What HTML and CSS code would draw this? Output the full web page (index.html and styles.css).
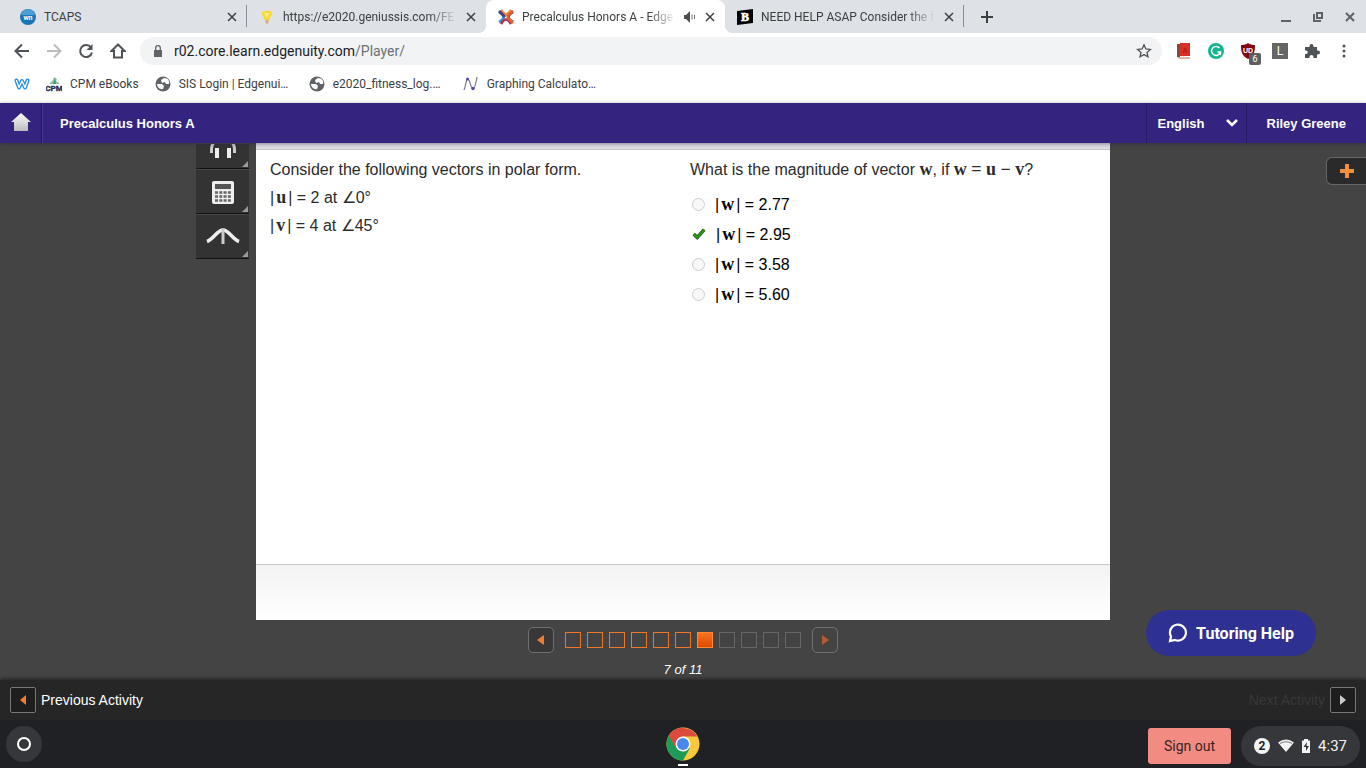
FILE: index.html
```html
<!DOCTYPE html>
<html lang="en">
<head>
    <meta charset="UTF-8">
    <meta name="viewport" content="width=device-width, initial-scale=1.0">
    <title>Precalculus Honors A - Edgenuity</title>
    <link rel="stylesheet" href="styles.css">
</head>
<body>
    <!-- browser tabs -->
    <div class="tab-strip">
        <div class="tab">
            <svg class="icon" viewBox="0 0 16 16"><circle cx="8" cy="8" r="8" fill="#1c75b4"/><path d="M1 6a7 6 0 0 1 14 0z" fill="#4b9fd6"/><text x="8" y="11" font-size="7" font-weight="bold" text-anchor="middle" fill="#fff">wn</text></svg>
            <span class="tab-title">TCAPS</span>
            <button class="tab-close" aria-label="Close tab"><svg viewBox="0 0 12 12"><path d="M2 2l8 8M10 2l-8 8"/></svg></button>
        </div>
        <div class="tab divided">
            <svg class="icon" viewBox="0 0 16 16"><path d="M3 4c0-3 10-3 10 0 0 3-2 4-2.500 7h-5C5 8 3 7 3 4z" fill="#fdd835"/><path d="M5 4h6L8 9z" fill="#fff176"/><path d="M6 11h4l-.5 3-1.500 1-1.500-1z" fill="#d9b08c"/></svg>
            <span class="tab-title fade">https://e2020.geniussis.com/FE</span>
            <button class="tab-close" aria-label="Close tab"><svg viewBox="0 0 12 12"><path d="M2 2l8 8M10 2l-8 8"/></svg></button>
        </div>
        <div class="tab active">
            <svg class="icon" viewBox="0 0 16 16" fill="none" stroke-width="2.600"><path d="M1 3Q10 8 1 13" stroke="#2a9fd0"/><path d="M15 3Q6 8 15 13" stroke="#1f4f8f"/><path d="M3 15Q8 6 13 15" stroke="#b3305a"/><path d="M3 1Q8 10 13 1" stroke="#f0852c"/><path d="M1 2l6 6" stroke="#4a3a86"/><path d="M15 2L9 8" stroke="#e2572b"/><path d="M15 14L9 8" stroke="#e8642c"/></svg>
            <span class="tab-title fade">Precalculus Honors A - Edge</span>
            <svg class="speaker" viewBox="0 0 12 12"><path d="M0 4h2l4-4v12L2 8H0z" fill="#4a4d51"/><path d="M8 3.500v5M10.500 4v4" stroke="#6b6e72" fill="none"/></svg>
            <button class="tab-close" aria-label="Close tab"><svg viewBox="0 0 12 12"><path d="M2 2l8 8M10 2l-8 8"/></svg></button>
        </div>
        <div class="tab divided">
            <svg class="icon" viewBox="0 0 16 16"><path d="M0 2l16-2v14L0 16z" fill="#000"/><text x="8" y="12" font-family="Liberation Serif" font-size="12" font-weight="bold" text-anchor="middle" fill="#fff" stroke="#fff" stroke-width=".6">B</text></svg>
            <span class="tab-title fade">NEED HELP ASAP Consider the f</span>
            <button class="tab-close" aria-label="Close tab"><svg viewBox="0 0 12 12"><path d="M2 2l8 8M10 2l-8 8"/></svg></button>
        </div>
        <button class="new-tab" aria-label="New tab"><svg viewBox="0 0 12 12"><path d="M6 0v12M0 6h12"/></svg></button>
        <div class="window-buttons">
            <button aria-label="Minimize"><svg viewBox="0 0 12 12"><path d="M1 10h10"/></svg></button>
            <button aria-label="Restore"><svg viewBox="0 0 12 12"><path d="M5 2h5v5H5zM2 3v7h7"/></svg></button>
            <button aria-label="Close"><svg viewBox="0 0 12 12"><path d="M2 2l8 8M10 2l-8 8"/></svg></button>
        </div>
    </div>

    <!-- address bar -->
    <div class="toolbar">
        <button class="tool" aria-label="Back"><svg viewBox="0 0 16 16"><path d="M15 8H2M8 1.500L1.500 8 8 14.500"/></svg></button>
        <button class="tool disabled" aria-label="Forward"><svg viewBox="0 0 16 16"><path d="M1 8h13M8 1.500L14.500 8 8 14.500"/></svg></button>
        <button class="tool" aria-label="Reload"><svg viewBox="0 0 16 16"><path d="M13 4.500A6 6 0 1 0 14 9.500"/><path d="M14.500 1v6h-6z" class="solid"/></svg></button>
        <button class="tool" aria-label="Home"><svg viewBox="0 0 16 16"><path d="M8 1.500L1.500 8H4v6.500h8V8h2.500z"/></svg></button>
        <div class="omnibox">
            <svg class="lock" viewBox="0 0 10 12"><path d="M1 5h8v7H1z" fill="#5f6368"/><path d="M2.700 5V3a2.300 2.300 0 0 1 4.600 0v2" fill="none" stroke="#5f6368" stroke-width="1.300"/></svg>
            <div class="url">r02.core.learn.edgenuity.com<span>/Player/</span></div>
            <button class="star" aria-label="Bookmark this page"><svg viewBox="0 0 16 16"><path d="M8 1.800l1.900 4.100 4.500.500-3.400 3 1 4.400L8 11.600l-4 2.200 1-4.400-3.400-3 4.500-.5z"/></svg></button>
        </div>
        <button class="tool" aria-label="Dictionary"><svg viewBox="0 0 16 16"><path class="plain" d="M1 1h3v13H1z" fill="#7c4d45"/><path class="plain" d="M4 0h10v13H4z" fill="#d93025"/><path class="plain" d="M1 14h13v2H3z" fill="#e8b29c"/><text x="9" y="10" font-size="8" text-anchor="middle" fill="#a8150e">A</text></svg></button>
        <button class="tool" aria-label="Grammarly"><svg viewBox="0 0 16 16"><circle class="plain" cx="8" cy="8" r="8" fill="#15b68f"/><path class="plain" d="M11.500 5A4.500 4.500 0 1 0 12.400 9H9.500M12.400 9v3" fill="none" stroke="#fff" stroke-width="1.500"/></svg></button>
        <button class="tool" aria-label="uBlock">
            <svg viewBox="0 0 16 16"><path class="plain" d="M8 0c2 1.500 4 2 7 2 0 7-1 11-7 14C2 13 1 9 1 2c3 0 5-.5 7-2z" fill="#800610"/><text x="8" y="10" font-size="7" font-weight="bold" text-anchor="middle" fill="#fff">UD</text></svg>
            <span class="badge">6</span>
        </button>
        <button class="tool" aria-label="Extension"><span class="letter">L</span></button>
        <button class="tool" aria-label="Extensions"><svg viewBox="0 0 16 16"><path class="solid" d="M1 4h4.500V3a2 2 0 0 1 4 0v1H13v3.500h1a2 2 0 0 1 0 4h-1V15H9.500v-1a2 2 0 0 0-4 0v1H1v-4h1a1.700 1.700 0 0 0 0-3.500H1z"/></svg></button>
        <button class="tool" aria-label="Menu"><svg viewBox="0 0 16 16"><g class="solid"><circle cx="8" cy="3" r="1.500"/><circle cx="8" cy="8" r="1.500"/><circle cx="8" cy="13" r="1.500"/></g></svg></button>
    </div>

    <nav class="bookmarks">
        <a href="#" aria-label="Weebly"><svg class="icon" viewBox="0 0 16 16" fill="none" stroke-linejoin="round" stroke-linecap="round"><path d="M2.500 4.500L5 11.500 8 5l3 6.500 2.500-7" stroke="#2990ea" stroke-width="4"/><path d="M2.500 4.500L5 11.500 8 5l3 6.500 2.500-7" stroke="#fff" stroke-width="1.300"/></svg></a>
        <a href="#"><svg class="icon" viewBox="0 0 16 16"><path d="M3 8l4-4 1-3 3 2-1 2 4 3z" fill="#8cc3a0"/><path d="M7 8l2-6 1 6z" fill="#3f9b6c"/><text x="8" y="15" font-size="8" font-weight="bold" text-anchor="middle" fill="#1d2f58" stroke="#1d2f58" stroke-width=".4">CPM</text></svg><span>CPM eBooks</span></a>
        <a href="#"><svg class="icon" viewBox="0 0 16 16"><circle cx="8" cy="8" r="7.500" fill="#5f6368"/><path d="M2 8h5l2 2-1 3c-3 1-6-2-6-5zM6 4l3-2c4 0 6 3 5 6h-3l-1-2-3 1z" fill="#fff"/></svg><span class="cut">SIS Login | Edgenui…</span></a>
        <a href="#"><svg class="icon" viewBox="0 0 16 16"><circle cx="8" cy="8" r="7.500" fill="#5f6368"/><path d="M2 8h5l2 2-1 3c-3 1-6-2-6-5zM6 4l3-2c4 0 6 3 5 6h-3l-1-2-3 1z" fill="#fff"/></svg><span class="cut">e2020_fitness_log.…</span></a>
        <a href="#"><svg class="icon" viewBox="0 0 16 16"><path d="M1 14C3 10 3 2 5 3s3 10 5 10 3-6 4-12" fill="none" stroke="#77728f" stroke-width="1.200"/><g fill="#6042a6"><circle cx="4.500" cy="3" r="1.500"/><circle cx="10" cy="12.500" r="1.700"/></g></svg><span class="cut">Graphing Calculato…</span></a>
    </nav>

    <!-- course header -->
    <header class="course-bar">
        <a class="home" href="#" aria-label="Home"><svg viewBox="0 0 20 20"><defs><linearGradient id="silver" x2="0" y2="1"><stop stop-color="#fff"/><stop offset="1" stop-color="#bbb"/></linearGradient></defs><path d="M10 0l10 9h-3v9H3v-9H0z" fill="url(#silver)"/></svg></a>
        <h1>Precalculus Honors A</h1>
        <div class="language">
            <select aria-label="Language"><option>English</option></select>
            <svg viewBox="0 0 12 12"><path d="M1 3l5 5 5-5"/></svg>
        </div>
        <a class="user" href="#">Riley Greene</a>
    </header>

    <main class="player">
        <div class="side">
            <div class="tools">
                <button class="audio" aria-label="Read aloud"><svg viewBox="0 0 34 34"><path d="M5.500 27v-4q0-5 4-8M28.500 27v-4q0-5-4-8" fill="none" stroke="#ccc" stroke-width="3"/><path d="M9 22h4v10H9zM21 22h4v10h-4z" fill="#eee"/></svg></button>
                <button aria-label="Calculator"><svg viewBox="0 0 34 34"><rect x="6" y="6" width="22" height="23" rx="2" fill="#eee"/><path d="M9 9h16v5H9z" fill="#555"/><path d="M9 17.500h16M9 21.500h16M9 25.500h16" stroke="#666" stroke-width="2.500" stroke-dasharray="3 1.300"/></svg></button>
                <button aria-label="Graphing tool"><svg viewBox="0 0 34 34"><path d="M1 21.500C8 19 11 10 17 10s9 9 16 11.500" fill="none" stroke="#eee" stroke-width="3.500"/><path d="M17 9v15" stroke="#ccc" stroke-width="3"/></svg></button>
            </div>
        </div>

        <section class="stage">
            <div class="frame">
                <div class="question">
                    <div class="prompt">
                        <p>Consider the following vectors in polar form.</p>
                        <p>|<b>u</b>| = 2 at ∠0°</p>
                        <p>|<b>v</b>| = 4 at ∠45°</p>
                    </div>
                    <form class="answers">
                        <p>What is the magnitude of vector <strong>w</strong>, if <strong>w = u − v</strong>?</p>
                        <label><input type="radio" name="answer"><span>|<b>w</b>| = 2.77</span></label>
                        <label><input class="correct" type="radio" name="answer" checked><svg class="check" viewBox="0 0 16 16"><path d="M2 8l4 4 8-9" fill="none" stroke="#1d5a10" stroke-width="4"/><path d="M2 8l4 4 8-9" fill="none" stroke="#2f9319" stroke-width="2.500"/></svg><span>|<b>w</b>| = 2.95</span></label>
                        <label><input type="radio" name="answer"><span>|<b>w</b>| = 3.58</span></label>
                        <label><input type="radio" name="answer"><span>|<b>w</b>| = 5.60</span></label>
                    </form>
                </div>
                <div class="frame-foot"></div>
            </div>

            <div class="pager">
                <button class="step" aria-label="Previous question"><svg viewBox="0 0 8 10"><path d="M7 0v10L0 5z"/></svg></button>
                <div class="squares">
                    <a class="done" href="#" aria-label="1"></a>
                    <a class="done" href="#" aria-label="2"></a>
                    <a class="done" href="#" aria-label="3"></a>
                    <a class="done" href="#" aria-label="4"></a>
                    <a class="done" href="#" aria-label="5"></a>
                    <a class="done" href="#" aria-label="6"></a>
                    <a class="current" href="#" aria-label="7"></a>
                    <a href="#" aria-label="8"></a>
                    <a href="#" aria-label="9"></a>
                    <a href="#" aria-label="10"></a>
                    <a href="#" aria-label="11"></a>
                </div>
                <button class="step off" aria-label="Next question"><svg viewBox="0 0 8 10"><path d="M1 0v10l7-5z"/></svg></button>
            </div>
            <p class="count">7 of 11</p>
        </section>

        <div class="side-right">
            <button class="add-note" aria-label="Open notes"><svg viewBox="0 0 14 14"><path d="M7 0v14M0 7h14"/></svg></button>
        </div>
        <button class="tutoring">
            <svg viewBox="0 0 20 20"><path d="M2 18l1-4.500A8 8 0 1 1 7 17z"/></svg>
            Tutoring Help
        </button>
    </main>

    <footer class="activity-bar">
        <button class="activity"><span class="arrow-box"><svg viewBox="0 0 8 10"><path d="M7 0v10L1 5z"/></svg></span>Previous Activity</button>
        <button class="activity next">Next Activity<span class="arrow-box"><svg viewBox="0 0 8 10"><path d="M1 0v10l6-5z"/></svg></span></button>
    </footer>

    <!-- system shelf -->
    <div class="shelf">
        <div class="shelf-left"><button class="launcher" aria-label="Launcher"><svg viewBox="0 0 16 16"><circle cx="8" cy="8" r="6"/></svg></button></div>
        <button class="chrome" aria-label="Chrome">
            <svg viewBox="0 0 34 34"><circle cx="17" cy="17" r="16.500" fill="#fbc83b"/><path d="M17 17L2.700 8.800A16.500 16.500 0 0 0 17 33.500l7-12.500z" fill="#1c9c57"/><path d="M2.700 8.800A16.500 16.500 0 0 1 31.300 9.500H17L10 21z" fill="#dc4a3e"/><circle cx="17" cy="17" r="7.500" fill="#fff"/><circle cx="17" cy="17" r="6" fill="#4a86ef"/></svg>
            <span class="running"></span>
        </button>
        <div class="shelf-right">
            <button class="sign-out">Sign out</button>
            <button class="status">
                <span class="notices">2</span>
                <svg viewBox="0 0 16 16"><path d="M0 4.500Q8-1.500 16 4.500L8 14z" fill="#f1f3f4"/><path d="M2 5.500q6-3.500 12 0" fill="none" stroke="#77797b"/></svg>
                <svg class="battery" viewBox="0 0 8 14"><path d="M2 0h4v1.500h2V14H0V1.500h2z" fill="#f1f3f4"/><path d="M5 3L1.500 8H4v4l3-5H4.500z" fill="#36373a"/></svg>
                <span>4:37</span>
            </button>
        </div>
    </div>
</body>
</html>
```
FILE: styles.css
```css
* {
    box-sizing: border-box;
}
body {
    margin: 0;
    min-height: 100vh;
    display: flex;
    flex-direction: column;
    font-family: "Liberation Sans", Arial, sans-serif;
    background-color: #444;
}
button {
    border: 0;
    padding: 0;
    background: none;
    font-family: inherit;
}
button, a {
    display: flex;
    align-items: center;
}
a {
    color: inherit;
    text-decoration: none;
}
p {
    margin: 0;
}
.icon {
    width: 16px;
    height: 16px;
    flex: none;
}

/* tabs */
.tab-strip {
    display: flex;
    height: 33px;
    padding-left: 8px;
    background-color: #dee1e6;
    font: 12px Roboto, sans-serif;
    color: #3c4043;
}
.tab {
    display: flex;
    align-items: center;
    gap: 8px;
    width: 239px;
    padding: 0 8px 0 12px;
    border-right: 1px solid transparent;
}
.tab:first-child, .divided:nth-child(4) {
    border-image: linear-gradient(transparent 6px, #8a8d91 6px, #8a8d91 26px, transparent 26px) 1;
    border-style: solid;
    border-width: 0 1px 0 0;
}
.tab.active {
    position: relative;
    background-color: #fff;
    border-radius: 8px 8px 0 0;
}
/* curved feet of the active tab */
.tab.active::before, .tab.active::after {
    content: "";
    position: absolute;
    bottom: 0;
    width: 8px;
    height: 8px;
}
.tab.active::before {
    left: -8px;
    background: radial-gradient(circle at 0 0, transparent 8px, #fff 8px);
}
.tab.active::after {
    right: -9px;
    background: radial-gradient(circle at 100% 0, transparent 8px, #fff 8px);
}
.tab-title {
    flex: 1;
    overflow: hidden;
    white-space: nowrap;
    line-height: 16px;
}
.tab-title.fade {
    -webkit-mask-image: linear-gradient(to left, transparent, #000 28px);
    mask-image: linear-gradient(to left, transparent, #000 28px);
}
.speaker {
    width: 12px;
    height: 12px;
    flex: none;
}
.tab-close svg, .new-tab svg, .window-buttons svg {
    width: 12px;
    height: 12px;
    fill: none;
    stroke: #3c4043;
    stroke-width: 2;
}
.tab-close svg {
    stroke-width: 1.5;
}
.new-tab {
    padding: 0 17px;
}
.window-buttons {
    display: flex;
    gap: 20px;
    margin-left: auto;
    padding-right: 10px;
}
.window-buttons svg {
    stroke: #5f6368;
}

/* address bar */
.toolbar {
    display: flex;
    align-items: center;
    height: 36px;
    padding: 0 6px;
    background-color: #fff;
}
.tool {
    position: relative;
    justify-content: center;
    width: 32px;
    height: 28px;
}
.tool svg, .star svg {
    width: 16px;
    height: 16px;
}
.tool path:not(.plain), .star path {
    fill: none;
    stroke: #4f5357;
    stroke-width: 2;
}
.star path {
    stroke-width: 1.3;
}
.tool.disabled path:not(.plain) {
    stroke: #babcbe;
}
.tool path.solid:not(.plain), .tool .solid {
    fill: #4f5357;
    stroke: none;
}
.badge {
    position: absolute;
    right: 3px;
    bottom: 0;
    width: 12px;
    border-radius: 2px;
    background-color: #5d5f61;
    color: #fff;
    font: 9px/12px Roboto, sans-serif;
    text-align: center;
}
.letter {
    width: 16px;
    background-color: #666;
    color: #fff;
    font: 12px/16px Roboto, sans-serif;
}
.omnibox {
    display: flex;
    align-items: center;
    flex: 1;
    height: 28px;
    margin: 0 6px;
    padding: 0 10px 0 13px;
    border-radius: 14px;
    background-color: #f1f3f4;
    font: 14px Roboto, sans-serif;
    color: #202124;
}
.lock {
    width: 10px;
    height: 12px;
    margin-right: 11px;
}
.url {
    flex: 1;
}
.url span {
    color: #6d7175;
}

.bookmarks {
    display: flex;
    align-items: center;
    gap: 16px;
    height: 34px;
    padding: 0 14px 4px;
    background-color: #fff;
    font: 12px Roboto, sans-serif;
    color: #3c4043;
}
.bookmarks a {
    gap: 8px;
}
.cut {
    width: 114px;
    white-space: nowrap;
}

/* course header */
.course-bar {
    display: flex;
    align-items: stretch;
    height: 40px;
    background-color: #34237f;
    color: #fff;
    font-size: 13px;
    font-weight: bold;
    box-shadow: 0 1px 4px rgba(40, 30, 80, 0.5);
    position: relative;
    z-index: 1;
}
.home {
    justify-content: center;
    width: 42px;
    border-right: 1px solid #231656;
    box-shadow: 1px 0 #4a3a94;
}
.home svg {
    width: 20px;
    height: 20px;
}
.course-bar h1 {
    flex: 1;
    margin: 0;
    padding-left: 18px;
    font-size: 13px;
    line-height: 41px;
}
.language {
    display: flex;
    align-items: center;
    width: 101px;
    padding: 0 8px 0 11px;
    border-left: 1px solid #281a64;
    border-right: 1px solid #281a64;
}
.language select {
    flex: 1;
    appearance: none;
    border: 0;
    padding: 0;
    background: none;
    color: #fff;
    font: inherit;
}
.language svg {
    width: 12px;
    height: 12px;
    fill: none;
    stroke: #fff;
    stroke-width: 2.5;
}
.user {
    padding: 0 20px;
}

/* player */
.player {
    flex: 1;
    display: grid;
    grid-template-columns: 1fr 854px 1fr;
    position: relative;
    background-color: #444;
}
.side {
    display: flex;
    justify-content: flex-end;
    align-items: flex-start;
    padding-right: 7px;
}
.tools {
    width: 53px;
    background-color: #333;
}
.tools button {
    position: relative;
    justify-content: center;
    width: 100%;
    height: 45px;
    border-top: 1px solid #484848;
    border-bottom: 1px solid #111;
}
.tools button.audio {
    align-items: flex-end;
    height: 26px;
    padding-bottom: 8px;
    overflow: hidden;
}
.tools button::after {
    content: "";
    position: absolute;
    right: 1px;
    bottom: 1px;
    border-left: 6px solid transparent;
    border-bottom: 6px solid #999;
}
.tools svg {
    width: 34px;
    height: 34px;
    flex: none;
}
.frame {
    display: flex;
    flex-direction: column;
    height: 477px;
    border-top: 6px solid #e0e0e6;
    background-color: #fff;
}
.question {
    flex: 1;
    display: grid;
    grid-template-columns: 1fr 1fr;
    gap: 14px;
    padding: 6px 14px;
    border-top: 1px solid #c4c4c8;
    font-size: 16px;
    line-height: 28px;
    color: #2b2b2b;
}
.question b, .question strong {
    font-family: "Liberation Serif", serif;
    font-size: 18px;
    line-height: 20px;
}
.question b {
    padding: 0 2px;
}
.answers p {
    margin-bottom: 5px;
}
.answers label {
    display: flex;
    align-items: center;
    gap: 10px;
    height: 30px;
    padding-left: 2px;
    color: #000;
}
.answers label span {
    padding-top: 2px;
}
.answers input {
    appearance: none;
    width: 13px;
    height: 13px;
    margin: 0;
    border: 1px solid #ccc;
    border-radius: 50%;
    background-color: #f8f8f8;
}
.answers input.correct {
    position: absolute;
    opacity: 0;
}
.check {
    width: 14px;
    height: 14px;
}
.frame-foot {
    height: 56px;
    border-top: 1px solid #ccc;
    background: linear-gradient(#f3f3f3, #fff);
}
.pager {
    display: flex;
    justify-content: center;
    align-items: center;
    gap: 11px;
    padding-top: 7px;
}
.squares {
    display: flex;
    gap: 6px;
}
.squares a {
    width: 16px;
    height: 16px;
    border: 1px solid #666;
}
.squares .done {
    border-color: #ee7625;
}
.squares .current {
    border-color: #ff8a35;
    background: linear-gradient(#f9711c, #e04a00);
}
.step {
    justify-content: center;
    width: 26px;
    height: 26px;
    border: 1px solid #707070;
    border-radius: 5px;
    background-color: #383838;
}
.step svg, .arrow-box svg {
    width: 8px;
    height: 10px;
    fill: #f57c2e;
}
.step.off {
    background-color: #444;
}
.step.off svg {
    fill: #b35a36;
}
.count {
    padding-top: 9px;
    color: #fff;
    font-size: 13px;
    font-style: italic;
    line-height: 16px;
    text-align: center;
}
.side-right {
    display: flex;
    justify-content: flex-end;
    align-items: flex-start;
    padding-top: 14px;
}
.add-note {
    justify-content: center;
    width: 40px;
    height: 28px;
    border: 1px solid #666;
    border-right: 0;
    border-radius: 6px 0 0 6px;
    background-color: #2a2a2a;
}
.add-note svg {
    width: 14px;
    height: 14px;
    stroke: #f28e3c;
    stroke-width: 4;
}
.tutoring {
    position: absolute;
    right: 50px;
    bottom: 24px;
    gap: 8px;
    height: 46px;
    padding: 0 22px;
    border-radius: 23px;
    background-color: #2e3192;
    color: #fff;
    font: bold 16px Roboto, sans-serif;
}
.tutoring svg {
    width: 20px;
    height: 20px;
    fill: none;
    stroke: #fff;
    stroke-width: 2.2;
}

.activity-bar {
    display: flex;
    justify-content: space-between;
    height: 40px;
    padding: 0 10px;
    background-color: #262626;
    box-shadow: 0 -1px 4px rgba(0, 0, 0, 0.5);
    position: relative;
}
.activity {
    gap: 5px;
    color: #fff;
    font-size: 14px;
}
.activity.next {
    color: #383838;
}
.arrow-box {
    display: flex;
    align-items: center;
    justify-content: center;
    width: 26px;
    height: 26px;
    border: 1px solid #777;
    border-radius: 2px;
    background-color: #1e1e1e;
}
.next .arrow-box svg {
    fill: #ccc;
}

/* shelf */
.shelf {
    display: grid;
    grid-template-columns: 1fr auto 1fr;
    align-items: center;
    height: 48px;
    padding: 0 6px;
    background-color: #202124;
    position: relative;
}
.launcher {
    justify-content: center;
    width: 36px;
    height: 36px;
    border-radius: 50%;
    background-color: #36373a;
}
.launcher svg {
    width: 16px;
    height: 16px;
    fill: none;
    stroke: #fff;
    stroke-width: 2;
}
.chrome {
    position: relative;
    height: 48px;
}
.chrome svg {
    width: 34px;
    height: 34px;
}
.running {
    position: absolute;
    left: 12px;
    bottom: 2px;
    width: 10px;
    height: 2px;
    background-color: #fff;
}
.shelf-right {
    display: flex;
    justify-content: flex-end;
    align-items: center;
    gap: 10px;
    padding-top: 4px;
    font-family: Roboto, sans-serif;
}
.sign-out {
    height: 36px;
    padding: 0 16px;
    border-radius: 3px;
    background-color: #f28b82;
    color: #3a2422;
    font-size: 14px;
}
.status {
    gap: 8px;
    height: 40px;
    padding: 0 13px;
    border-radius: 20px;
    background-color: #36373a;
    color: #f1f3f4;
    font-size: 15px;
}
.status svg {
    width: 16px;
    height: 16px;
}
.status .battery {
    width: 8px;
    height: 14px;
}
.notices {
    width: 16px;
    border-radius: 50%;
    background-color: #f1f3f4;
    color: #202124;
    font: bold 12px/16px Roboto, sans-serif;
    text-align: center;
}
```
